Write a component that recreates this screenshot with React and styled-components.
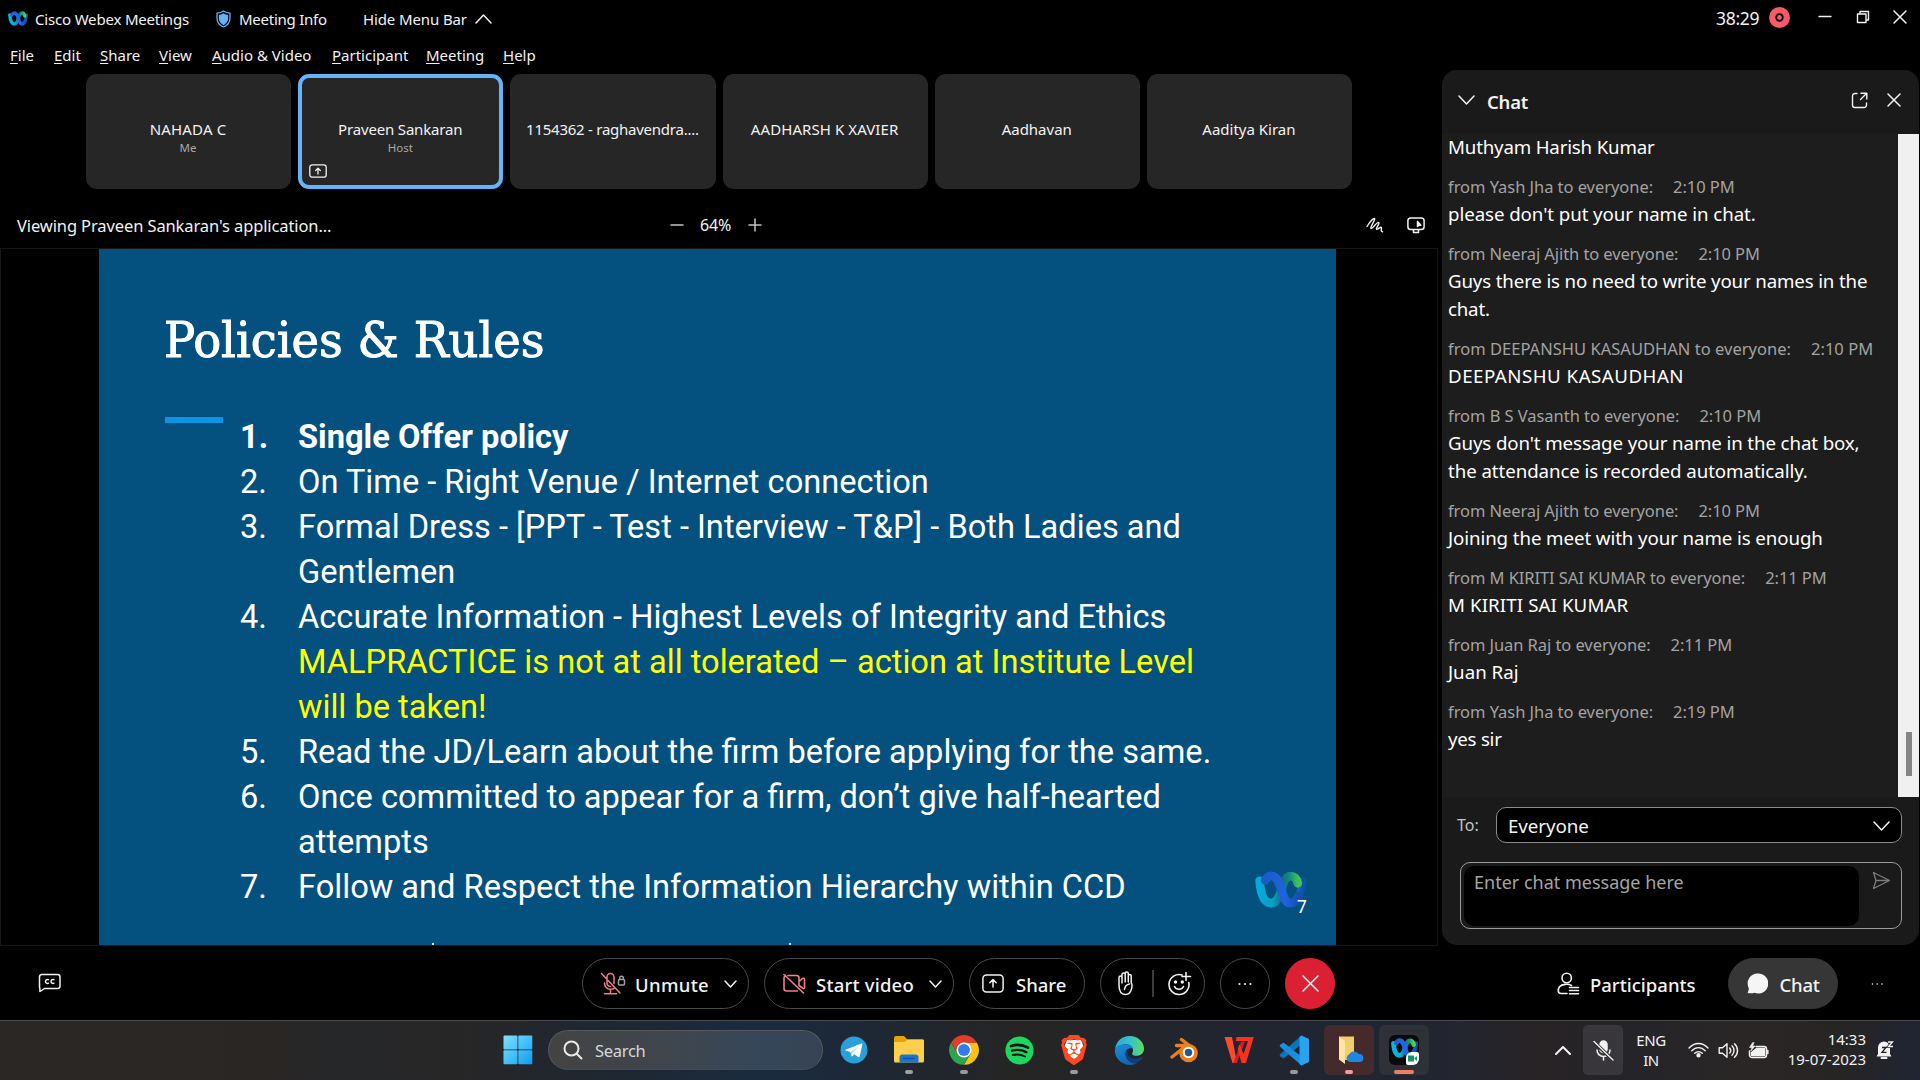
import React from "react";
import styled, { createGlobalStyle, css } from "styled-components";
import { SiBrave } from "react-icons/si";

const Global = createGlobalStyle`
  * { box-sizing: border-box; }
  body { margin: 0; background: #000; overflow: hidden; }
`;

const ui = css`
  font-family: "Noto Sans", "Open Sans", sans-serif;
`;

const Screen = styled.div`
  ${ui}
  width: 1920px;
  height: 1080px;
  background: #000;
  color: #f2f2f2;
  display: flex;
  flex-direction: column;
  overflow: hidden;
  white-space: nowrap;
`;

const Workspace = styled.div`
  height: 945px;
  display: grid;
  grid-template-columns: 1442px 477px;
`;

const Left = styled.div`
  display: flex;
  flex-direction: column;
`;

const Right = styled.div`
  display: flex;
  flex-direction: column;
`;

/* ---------- title bar and menus ---------- */

const TitleBar = styled.div`
  height: 38px;
  display: flex;
  align-items: center;
  font-size: 15px;
`;

const TitleItem = styled.div`
  display: flex;
  align-items: center;
  line-height: 20px;
  width: ${(p) => p.$w}px;
  margin-left: ${(p) => p.$ml}px;
  padding-bottom: ${(p) => p.$pb || 0}px;
  gap: ${(p) => p.$gap}px;
  letter-spacing: ${(p) => p.$ls || 0}px;
`;

const MenuBar = styled.div`
  height: 36px;
  padding: 6px 0 0 10px;
  display: flex;
  gap: 20px;
  font-size: 15px;
  line-height: 22px;
`;

const MenuItem = styled.span`
  width: ${(p) => p.$w}px;
  &::first-letter {
    text-decoration: underline;
    text-underline-offset: 2px;
  }
`;

const WindowControls = styled.div`
  height: 70px;
  display: flex;
  justify-content: flex-end;
  padding: 6px 12px 0 0;
`;

const ControlRow = styled.div`
  height: 22px;
  display: flex;
  align-items: center;
`;

const ControlGap = styled.div`
  width: ${(p) => p.$w}px;
`;

const Timer = styled.span`
  font-size: 17.5px;
  line-height: 20px;
  padding-top: 2px;
  width: 53px;
  letter-spacing: -0.3px;
`;

/* ---------- participant strip ---------- */

const Strip = styled.div`
  width: 1266px;
  height: 115px;
  margin-left: 86px;
  display: grid;
  grid-template-columns: repeat(6, 1fr);
  gap: 7px;
`;

const Tile = styled.div`
  position: relative;
  background: #262626;
  border-radius: 11px;
  border: 4px solid ${(p) => (p.$active ? "#64b4fa" : "#262626")};
  display: flex;
  flex-direction: column;
  align-items: center;
  padding: 40px 1px 0 0;
`;

const TileName = styled.div`
  font-size: 15px;
  line-height: 22px;
  letter-spacing: ${(p) => p.$ls || 0}px;
`;

const TileRole = styled.div`
  font-size: 11.5px;
  line-height: 15px;
  color: #a8a8a8;
`;

const TileBadge = styled.div`
  position: absolute;
  left: 7px;
  bottom: 7px;
  display: flex;
`;

/* ---------- share bar and stage ---------- */

const ShareBar = styled.div`
  height: 59px;
  padding: 13px 17px 0 17px;
  display: flex;
  align-items: center;
  font-size: 16.5px;
`;

const ShareTitle = styled.div`
  width: 653px;
  letter-spacing: -0.11px;
`;

const ZoomGroup = styled.div`
  flex: 1;
  display: flex;
  align-items: center;
`;

const ZoomValue = styled.span`
  width: 64px;
  padding-left: 16px;
  font-size: 16px;
  letter-spacing: -0.1px;
`;

const ShareTools = styled.div`
  display: flex;
  gap: 23px;
  align-items: center;
`;

const Stage = styled.div`
  width: 1438px;
  height: 698px;
  border: 1px solid #161616;
  padding-left: 98px;
`;

const Slide = styled.div`
  position: relative;
  width: 1237px;
  height: 696px;
  background: #04507e;
  padding: 54px 0 0 66px;
  font-family: Roboto, sans-serif;
  color: #fff;
  overflow: hidden;
`;

const SlideTitle = styled.h1`
  margin: 0 0 0 -1px;
  height: 75px;
  line-height: 76px;
  font-family: "DejaVu Serif Condensed", "DejaVu Serif", serif;
  font-stretch: condensed;
  font-weight: 400;
  font-size: 49px;
  -webkit-text-stroke: 0.9px #fff;
  transform: scaleX(1.053);
  transform-origin: left;
`;

const Accent = styled.div`
  width: 58px;
  height: 6px;
  margin-top: 39px;
  background: #0c95e4;
`;

const Rules = styled.ol`
  list-style: none;
  margin: -8px 0 0 75px;
  padding: 0;
  font-size: 32.62px;
  line-height: 45.05px;
`;

const Rule = styled.li`
  display: grid;
  grid-template-columns: 58px auto;
  font-weight: ${(p) => (p.$bold ? 700 : 400)};
`;

const Line = styled.div`
  color: ${(p) => (p.$warn ? "#ffff00" : "#fff")};
`;

const Watermark = styled.div`
  position: absolute;
  left: 1156px;
  top: 622px;
  display: flex;
  opacity: 0.85;
`;

const PageNumber = styled.div`
  position: absolute;
  left: 1198px;
  top: 648px;
  font-size: 17.5px;
  line-height: 20px;
`;

const CutGlyph = styled.div`
  position: absolute;
  left: ${(p) => p.$x}px;
  top: 694px;
  width: 2px;
  height: 2px;
  background: #cfe0ea;
`;

/* ---------- chat panel ---------- */

const Panel = styled.div`
  height: 875px;
  background: #1a1a1a;
  border-radius: 15px;
  overflow: hidden;
  display: flex;
  flex-direction: column;
`;

const PanelHead = styled.div`
  height: 64px;
  display: flex;
  align-items: center;
  padding: 0 18px 4px 16px;
`;

const PanelTitle = styled.div`
  flex: 1;
  padding: 3px 0 0 12px;
  font-size: 18.5px;
  font-weight: 600;
  letter-spacing: -0.2px;
`;

const Messages = styled.div`
  height: 663px;
  background: #1d1d1d;
  display: flex;
`;

const MessageList = styled.div`
  flex: 1;
  margin-top: -1px;
  padding-left: 6px;
`;

const Message = styled.div`
  margin-bottom: 12px;
`;

const Meta = styled.div`
  height: 27px;
  line-height: 28px;
  display: flex;
  gap: 20px;
  font-size: 16.5px;
  color: #a3a3a3;
  letter-spacing: ${(p) => p.$ls || 0}px;
`;

const Body = styled.div`
  height: 28px;
  line-height: 28px;
  font-size: 18.7px;
  color: #fff;
  letter-spacing: ${(p) => p.$ls || 0}px;
`;

const ScrollTrack = styled.div`
  width: 21px;
  background: #f0f0f0;
  padding: 598px 0 0 8px;
`;

const ScrollThumb = styled.div`
  width: 6px;
  height: 44px;
  background: #858585;
`;

const ToRow = styled.div`
  display: flex;
  align-items: center;
  padding: 10px 17px 0 15px;
  font-size: 16px;
  color: #c4c4c4;
`;

const ToLabel = styled.div`
  width: 39px;
`;

const Select = styled.div`
  flex: 1;
  height: 36px;
  border: 1px solid #8a8a8a;
  border-radius: 10px;
  background: #000;
  color: #f4f4f4;
  font-size: 18.8px;
  letter-spacing: -0.1px;
  display: flex;
  align-items: center;
  justify-content: space-between;
  padding: 2px 11px 0 11px;
`;

const Composer = styled.div`
  margin: 19px 17px 0 18px;
  height: 67px;
  border: 1px solid #9a9a9a;
  border-radius: 10px;
  display: flex;
  padding: 3px 10px 2px 3px;
  justify-content: space-between;
`;

const Entry = styled.div`
  width: 395px;
  background: #000;
  border-radius: 10px;
  padding: 2px 0 0 10px;
  font-size: 18px;
  line-height: 28px;
  color: #a5a5a5;
`;

const SendSlot = styled.div`
  padding-top: 5px;
`;

/* ---------- call controls ---------- */

const CallBar = styled.div`
  height: 75px;
  padding-top: 13px;
  display: flex;
  align-items: flex-start;
`;

const CaptionSlot = styled.div`
  width: 582px;
  height: 50px;
  padding-left: 38px;
  display: flex;
  align-items: center;
`;

const CallGroup = styled.div`
  display: flex;
  gap: 15px;
  width: 975px;
`;

const Pill = styled.div`
  width: ${(p) => p.$w}px;
  height: 51px;
  border-radius: 26px;
  border: 1px solid ${(p) => p.$fill || "#4a4a4a"};
  background: ${(p) => p.$fill || "transparent"};
  padding-left: ${(p) => p.$pl || 0}px;
  justify-content: ${(p) => (p.$pl ? "flex-start" : "center")};
  display: flex;
  align-items: center;
  flex-shrink: 0;
`;

const PillText = styled.span`
  font-size: 18.5px;
  font-weight: 500;
  padding-top: 2px;
  width: ${(p) => p.$w}px;
  margin-left: ${(p) => p.$ml}px;
  letter-spacing: ${(p) => p.$ls || 0}px;
`;

const Divider = styled.div`
  width: 2px;
  height: 27px;
  background: #3c3c3c;
  margin: 0 14px 0 18px;
`;

const PanelButtons = styled.div`
  display: flex;
  align-items: center;
`;

const ParticipantsButton = styled.div`
  width: 170.5px;
  display: flex;
  align-items: center;
`;

const MoreSlot = styled.div`
  margin-left: 33px;
  display: flex;
`;

/* ---------- taskbar ---------- */

const Taskbar = styled.div`
  height: 60px;
  border-top: 1px solid #4b4b4b;
  padding-bottom: 1px;
  display: flex;
  align-items: center;
  background: linear-gradient(
    90deg,
    #2b2725 0%, #2a2624 14%, #252729 17%, #272627 24%, #1f2730 31%,
    #1a2b3f 40%, #1e2733 46%, #262524 53%, #212530 63%, #1f2631 72%,
    #232530 76%, #282325 80%, #242429 85%, #2a2625 91%, #272424 96%, #1f2532 100%
  );
`;

const StartSlot = styled.div`
  width: 548px;
  padding-left: 502.5px;
  display: flex;
`;

const SearchBox = styled.div`
  width: 275px;
  height: 40px;
  border-radius: 20px;
  border: 1px solid #55585c;
  border-bottom-color: #434a52;
  background: linear-gradient(90deg, #444343, #3c4651 55%, #35465a 80%, #374352);
  display: flex;
  align-items: center;
  gap: 12px;
  padding-left: 14px;
  font-size: 16.5px;
  letter-spacing: -0.3px;
  color: #d6d6d6;
`;

const Apps = styled.div`
  display: flex;
  gap: 5px;
  margin-left: 6px;
`;

const AppSlot = styled.div`
  position: relative;
  width: 50px;
  height: 50px;
  border-radius: 6px;
  background: ${(p) => p.$bg || "transparent"};
  display: flex;
  align-items: center;
  justify-content: center;
`;

const Indicator = styled.div`
  position: absolute;
  bottom: 1px;
  left: calc(50% - ${(p) => p.$w / 2}px);
  width: ${(p) => p.$w}px;
  height: 4px;
  border-radius: 2px;
  background: ${(p) => p.$c};
`;

const Tray = styled.div`
  margin-left: 126px;
  display: flex;
  align-items: center;
  font-size: 15px;
`;

const MicTile = styled.div`
  width: 40px;
  height: 50px;
  margin-left: 12px;
  border-radius: 5px;
  background: rgba(255, 255, 255, 0.09);
  display: flex;
  align-items: center;
  justify-content: center;
`;

const Lang = styled.div`
  width: 56px;
  text-align: center;
  line-height: 20px;
  padding-bottom: 1px;
  letter-spacing: -0.4px;
`;

const StatusIcons = styled.div`
  display: flex;
  align-items: center;
  gap: 9px;
  margin-left: 9px;
`;

const Clock = styled.div`
  width: 97px;
  text-align: right;
  line-height: 20px;
  padding-bottom: 2px;
  margin-right: 10px;
`;

const WebexTile = styled.div`
  position: relative;
  width: 30px;
  height: 30px;
  border-radius: 6px;
  background: #0a0a0c;
  display: flex;
  align-items: center;
  justify-content: center;
  padding-bottom: 4px;
`;

const CamBadge = styled.div`
  position: absolute;
  right: 0;
  bottom: 0;
  width: 13px;
  height: 13px;
  border-radius: 6px 2px 6px 2px;
  background: #fff;
  display: flex;
  align-items: center;
  justify-content: center;
`;

/* ---------- drawings ---------- */

const Svg = ({ w, h, vb, children, sw = 1.4, stroke = "#f2f2f2" }) => (
  <svg width={w} height={h} viewBox={vb || `0 0 ${w} ${h}`} fill="none" stroke={stroke}
    strokeWidth={sw} strokeLinecap="round" strokeLinejoin="round">{children}</svg>
);

const WebexLogo = ({ w, h, id }) => (
  <svg width={w} height={h} viewBox="0 0 50 36" fill="none" strokeLinecap="round" preserveAspectRatio="none">
    <defs>
      <linearGradient id={id + "a"} x1="0" x2="1"><stop offset="0" stopColor="#07b8e6" /><stop offset="0.6" stopColor="#0bb0cb" /><stop offset="1" stopColor="#1a6fa0" /></linearGradient>
      <linearGradient id={id + "b"} x1="0" x2="1"><stop offset="0" stopColor="#0f6f80" /><stop offset="0.5" stopColor="#149a80" /><stop offset="1" stopColor="#4fd452" /></linearGradient>
      <linearGradient id={id + "c"} x1="0" x2="1"><stop offset="0" stopColor="#1f5fd6" /><stop offset="0.6" stopColor="#2467f0" /><stop offset="1" stopColor="#1450b4" /></linearGradient>
    </defs>
    <path d="M46.500 9.500C46 19 42 31 34.500 31" stroke={`url(#${id}c)`} strokeWidth="7" />
    <path d="M4.500 9.500C5.500 22 8.500 31.200 16 31.200C21 31.200 24 25 26 18" stroke={`url(#${id}a)`} strokeWidth="8.500" />
    <path d="M26 18C28 9 30.500 5 35 5C39 5 41 8 42 12" stroke={`url(#${id}b)`} strokeWidth="8.500" />
    <path d="M10 9C11.500 6 13.500 4.800 16 4.800C27 5 25 31.200 34.500 31.200C38 31.200 41 28.500 43 24" stroke={`url(#${id}c)`} strokeWidth="8.500" />
  </svg>
);

const Chevron = ({ up, w = 16, h = 9, sw = 1.5, color }) => (
  <Svg w={w} h={h} sw={sw} stroke={color || "#f2f2f2"}>
    <path d={up ? `M1 ${h - 1}L${w / 2} 1L${w - 1} ${h - 1}` : `M1 1L${w / 2} ${h - 1}L${w - 1} 1`} />
  </Svg>
);

const Cross = ({ s, sw = 1.5 }) => (
  <Svg w={s} h={s} sw={sw}><path d={`M1 1L${s - 1} ${s - 1}M${s - 1} 1L1 ${s - 1}`} /></Svg>
);

const Shield = () => (
  <Svg w={15} h={18} sw={1.3} stroke="#64b4fa">
    <path d="M7.500 1C9.500 2.500 11.500 3 14 3.200V8C14 12.500 11.500 15.500 7.500 17C3.500 15.500 1 12.500 1 8V3.200C3.500 3 5.500 2.500 7.500 1Z" />
    <path d="M7.500 4C9 5 10.300 5.300 11.500 5.400V8C11.500 11 10 13 7.500 14.300C5 13 3.500 11 3.500 8V5.400C4.700 5.300 6 5 7.500 4Z" fill="#64b4fa" />
  </Svg>
);

const RecordDot = () => (
  <svg width="21" height="21"><circle cx="10.500" cy="10.500" r="10.500" fill="#f65a6b" /><circle cx="10.500" cy="10.500" r="3.300" fill="none" stroke="#000" strokeWidth="1.800" /></svg>
);

const ShareBadge = () => (
  <Svg w={18} h={14} sw={1.3}><rect x="0.800" y="0.800" width="16.400" height="12.400" rx="2.500" /><path d="M9 10V4.500M6.700 6.500L9 4.300L11.300 6.500" /></Svg>
);

const Squiggle = () => (
  <Svg w={18} h={16} sw={1.4}><path d="M1 9.500C3.500 5.500 6.500 1.500 8.500 1.500C10 2 3.500 10.500 5 11.500C6.500 12 11 4.500 12.800 5.500C14 6.500 9.500 11.500 10.500 12.300C11.500 12.900 14 9.800 15.300 10.300C16.300 11 13.800 14.300 16.500 14.800" /></Svg>
);

const Monitor = () => (
  <Svg w={18} h={17} sw={1.5}><rect x="0.900" y="1" width="16.200" height="11.500" rx="2.800" /><path d="M6.500 13V15.500H11.500V13" /><path d="M10.500 4.500V9.500L12 8.300L13.800 8.300Z" fill="#f2f2f2" /></Svg>
);

const PopOut = () => (
  <Svg w={17} h={17} sw={1.4}><path d="M6 1.500H4A2.500 2.500 0 0 0 1.500 4V13A2.500 2.500 0 0 0 4 15.500H13A2.500 2.500 0 0 0 15.500 13V11M10 1.200H15.800V7M15.500 1.500L9.500 7.500" /></Svg>
);

const Send = () => (
  <Svg w={19} h={19} sw={1.3} stroke="#7c7c7c"><path d="M1.500 1.500L17.500 9.500L1.500 17.500L4 9.500ZM4 9.500H17" /></Svg>
);

const Captions = () => (
  <Svg w={23} h={20} sw={1.5}>
    <path d="M3.500 1.500H19.500A2.500 2.500 0 0 1 22 4V13A2.500 2.500 0 0 1 19.500 15.500H6.500L2 18.500C1.500 18.500 2.500 16.500 1.500 14V4A2.500 2.500 0 0 1 3.500 1.500Z" />
    <path d="M10.500 6.700A2 2 0 1 0 10.500 10.200M16 6.700A2 2 0 1 0 16 10.200" />
  </Svg>
);

const MutedMic = () => (
  <svg width="26" height="23" fill="none" strokeLinecap="round" strokeLinejoin="round" strokeWidth="1.500">
    <g stroke="#f0808f">
      <path d="M7 9V5A3.500 3.500 0 0 1 14 5V11.500M7 9V11A3.500 3.500 0 0 0 10.500 14.500M4.500 11A6 6 0 0 0 10.500 17.300C11.800 17.300 13 17 14 16.300M10.500 17.300V21.500M4.500 21.800H16.500M1.500 1.500L20 21" />
    </g>
    <g stroke="#a0a0a0"><rect x="18.500" y="7.500" width="6" height="5.500" rx="1" /><path d="M19.700 7.500V6A1.800 1.800 0 0 1 23.300 6V7.500" /></g>
  </svg>
);

const NoVideo = () => (
  <Svg w={24} h={21} sw={1.6} stroke="#f0808f">
    <path d="M6 2.500H14.500A2.500 2.500 0 0 1 17 5V12.500M15.500 18H4.500A2.500 2.500 0 0 1 2 15.500V5A2.500 2.500 0 0 1 3.500 2.700M17 8.500L20.500 5.500C21.500 5 22.500 5.200 22.500 6.500V14.500C22.500 15.500 21.500 15.800 20.500 15L17 12.500M2 1.500L21.500 20" />
  </Svg>
);

const ShareIcon = () => (
  <Svg w={22} h={19} sw={1.5}><rect x="0.900" y="0.900" width="20.200" height="17.200" rx="3.500" /><path d="M11 13V6M7.800 8.800L11 5.600L14.200 8.800" /></Svg>
);

const Hand = () => (
  <Svg w={17} h={25} sw={1.5}>
    <path d="M2 14V6.500A1.500 1.500 0 0 1 5 6.500V12M5 11V3.500A1.600 1.600 0 0 1 8.200 3.500V11M8.200 10V2.500A1.500 1.500 0 0 1 11.300 2.500V11M11.300 10V4.500A1.500 1.500 0 0 1 14.200 4.500V12C15.500 13 15.500 23.500 8.500 23.500C4 23.500 2 20.500 2 14M7.500 18.500C8 15 10 13.500 12.500 13" />
  </Svg>
);

const Smile = () => (
  <Svg w={24} h={26} sw={1.6}>
    <path d="M14 4A10 10 0 1 0 20.800 11.500M18 1.500V9.500M14 5.500H22.500M6.500 15.500A5 5 0 0 0 15.500 15.500" />
    <circle cx="7.500" cy="11" r="0.900" fill="#f2f2f2" /><circle cx="14.300" cy="11" r="0.900" fill="#f2f2f2" />
  </Svg>
);

const Dots = ({ gap = 5.5, r = 1.1 }) => (
  <svg width={gap * 2 + 3} height="4" fill="#f2f2f2">
    <circle cx="1.500" cy="2" r={r} /><circle cx={1.5 + gap} cy="2" r={r} /><circle cx={1.5 + gap * 2} cy="2" r={r} />
  </svg>
);

const PersonList = () => (
  <Svg w={23} h={24} sw={1.6}>
    <circle cx="9.700" cy="6" r="4.700" />
    <path d="M10 21.500H4C0.500 21.500 0.800 17 2.500 14.700C5 12 11 11.500 14.500 13.500M12.500 15.500H21.500M12.500 18.500H21.500M12.500 21.700H21.500" />
  </Svg>
);

const Bubble = () => (
  <svg width="21" height="21"><path d="M10.500 0.500A10 10 0 1 1 7.500 19.700C5.500 20.500 3 20.500 0.800 20C0.300 19.500 2 18 1.700 15A10 10 0 0 1 10.500 0.500Z" fill="#f5f5f5" /></svg>
);

const WindowsLogo = () => (
  <svg width="30" height="30">
    <defs><linearGradient id="win" x1="0" y1="0" x2="30" y2="30" gradientUnits="userSpaceOnUse"><stop offset="0" stopColor="#86defb" /><stop offset="0.500" stopColor="#45c0fa" /><stop offset="1" stopColor="#1297ee" /></linearGradient></defs>
    <g fill="url(#win)"><rect x="0.500" y="0.500" width="14" height="14" rx="1" /><rect x="15.300" y="0.500" width="14" height="14" rx="1" /><rect x="0.500" y="15.300" width="14" height="14" rx="1" /><rect x="15.300" y="15.300" width="14" height="14" rx="1" /></g>
  </svg>
);

const Magnifier = () => (
  <Svg w={20} h={20} sw={2} stroke="#e8e8e8"><circle cx="8.500" cy="8.500" r="7" /><path d="M13.700 13.700L18.500 18.500" /></Svg>
);

const Telegram = () => (
  <svg width="28" height="28"><circle cx="14" cy="14" r="13.500" fill="#2b9fda" /><path d="M5.500 13.700L21.500 7.500C22.300 7.300 22.500 7.800 22.300 8.500L19.700 20.500C19.500 21.300 19 21.500 18.300 21L14.300 18.200L12.300 20.200C11.800 20.600 11.500 20.400 11.400 20L10.500 16L5.500 14.500C5 14.300 5 13.900 5.500 13.700Z" fill="#fff" /><path d="M10.500 16L18.500 10.500L12.500 17L11.500 20Z" fill="#b9d9ec" /></svg>
);

const FolderIcon = () => (
  <svg width="32" height="30">
    <path d="M1 3A2 2 0 0 1 3 1H11L14.500 4.500H29A2 2 0 0 1 31 6.500V12H1Z" fill="#e3a30b" />
    <path d="M1 7H12L14.500 4.500H30A1 1 0 0 1 31 5.500V26A1.500 1.500 0 0 1 29.500 27.500H2.500A1.500 1.500 0 0 1 1 26Z" fill="#fdcf4b" />
    <path d="M6.500 27.500V22.500A3 3 0 0 1 9.500 19.500H22.500A3 3 0 0 1 25.500 22.500V27.500Z" fill="#1677cd" /><path d="M10 23.500H22" stroke="#0a4f97" strokeWidth="1.300" />
  </svg>
);

const Chrome = () => (
  <svg width="30" height="30" viewBox="0 0 48 48">
    <path d="M24 12H44.500A23.700 23.700 0 0 1 24 47.700L34.400 30Z" fill="#fbc116" />
    <path d="M13.600 30L3.500 12A23.700 23.700 0 0 0 24 47.700L34.400 30Z" fill="#2da44e" />
    <path d="M3.500 12A23.700 23.700 0 0 1 44.500 12H24L13.600 30Z" fill="#e33b2e" />
    <circle cx="24" cy="24" r="12" fill="#fff" /><circle cx="24" cy="24" r="9.500" fill="#2f7de9" />
  </svg>
);

const Spotify = () => (
  <svg width="29" height="29"><circle cx="14.500" cy="14.500" r="14" fill="#1ed760" /><g fill="none" stroke="#111" strokeLinecap="round"><path d="M6 10C11.500 8.300 18 8.800 23 11.700" strokeWidth="2.700" /><path d="M7 14.700C12 13.300 17 13.800 21.500 16.200" strokeWidth="2.300" /><path d="M7.700 19C12 17.900 16 18.300 20 20.500" strokeWidth="1.900" /></g></svg>
);

const Brave = () => (
  <svg width="30" height="30" viewBox="0 0 30 30">
    <path d="M8 5H22L24.500 11L22 20L15 26L8 20L5.500 11Z" fill="#fff" />
    <SiBrave size={30} color="#fb4a22" />
  </svg>
);

const Edge = () => (
  <svg width="31" height="31" viewBox="0 0 32 32">
    <defs>
      <linearGradient id="e1" x1="0" x2="1"><stop offset="0" stopColor="#2aa7e0" /><stop offset="0.550" stopColor="#36c5c8" /><stop offset="1" stopColor="#62dc4e" /></linearGradient>
      <linearGradient id="e2" x1="0" y1="0" x2="0.400" y2="1"><stop offset="0" stopColor="#1b8fd8" /><stop offset="1" stopColor="#1166b8" /></linearGradient>
    </defs>
    <path d="M1 15C2 6 8.500 1 16 1C25 1 31 7.500 31 14C31 19 27 21.500 23.500 21.500C20 21.500 18 20 19 18.500C20.500 16.500 20 10 12.500 9.500C7 9.500 3 12 1 15Z" fill="url(#e1)" />
    <path d="M1 15C3 11.500 7.500 9.500 12.500 9.500C16.500 9.800 19 12 19.500 14.500C17 12.500 11.500 14.500 12 20C12.500 25.500 18 30 23.500 29C20 31.500 14 31.800 9 29C3.500 26 0.500 21 1 15Z" fill="url(#e2)" />
    <path d="M12 19C11.500 24.500 16.500 29.500 22.500 29C26 28 28.500 25.500 29.500 23.500C29.700 22.800 29 22.500 28.300 22.900C22 26 14 24.500 13.500 17C12.700 17.500 12.200 18 12 19Z" fill="#103f7d" />
  </svg>
);

const Blender = () => (
  <svg width="29" height="27" fill="none" stroke="#ea7f1c" strokeLinecap="round">
    <path d="M11.500 2.500L24 12M6.500 8.500H17M2 20L14 10.500" strokeWidth="3.400" />
    <circle cx="18.500" cy="16" r="9.300" fill="#ea7f1c" stroke="none" />
    <circle cx="18.500" cy="15.500" r="5.800" fill="#fff" stroke="none" />
    <circle cx="18.500" cy="15.500" r="3.700" fill="#24578f" stroke="none" />
  </svg>
);

const Wps = () => (
  <svg width="30" height="28">
    <path d="M0.500 1H8L13 27H8.500Z" fill="#ff4a30" />
    <path d="M9.500 27L17 5.500H21L13 27Z" fill="#c9211c" />
    <path d="M12.500 1H29.800L22 27H17.500L13.800 13L15.500 8L19.500 18L24 5H11.800Z" fill="#f5331f" />
  </svg>
);

const Code = () => (
  <svg width="31" height="31">
    <path d="M22.500 0.500V9.500L4.500 23.500L0.800 21V19.500Z" fill="#0b74bf" />
    <path d="M22.500 30.500V21.500L4.500 7.500L0.800 10V11.500Z" fill="#1a8fdb" />
    <path d="M22.500 0.500L30 4V27L22.500 30.500L20.500 29V2Z" fill="#2ba2ef" />
  </svg>
);

const CloudFolder = () => (
  <svg width="30" height="29"><path d="M5 0.500H20V24H7L5 22Z" fill="#f3cd6c" /><path d="M5 0.500L11 5V28L5 23.500Z" fill="#ffe6a0" /><path d="M15.500 26A4 4 0 0 1 15 18.500A5.500 5.500 0 0 1 24.500 18A4 4 0 0 1 26 26Z" fill="#1e88e0" /></svg>
);

const TrayMic = () => (
  <Svg w={21} h={21} sw={1.5}><rect x="7" y="1" width="7" height="11.500" rx="3.500" fill="#f2f2f2" /><path d="M4 10A6.500 6.500 0 0 0 17 10M10.500 16.500V20" /><path d="M1 2L20 20" stroke="#2b2b2e" strokeWidth="3.500" /><path d="M1 1.500L20 20" /></Svg>
);

const Wifi = () => (
  <Svg w={21} h={16} sw={1.4}><path d="M1 6C6.500 0 14.500 0 20 6M3.800 8.800C7.800 4.600 13.200 4.600 17.200 8.800M6.700 11.300C9 9 12 9 14.300 11.300" /><circle cx="10.500" cy="13.300" r="1.500" fill="#f2f2f2" /></Svg>
);

const Speaker = () => (
  <Svg w={21} h={17} sw={1.4}><path d="M1.200 5.800H4.500L9 1.800V15.200L4.500 11.200H1.200ZM11.700 6C13 7.500 13 9.500 11.700 11M14 3.800C16.700 6.500 16.700 10.500 14 13.200M16.500 1.800C20.500 5.500 20.500 11.500 16.500 15.200" /></Svg>
);

const Battery = () => (
  <Svg w={21} h={17} sw={1.5}><path d="M8 4.500H16A2.500 2.500 0 0 1 18.500 7V13A2.500 2.500 0 0 1 16 15.500H4A2.500 2.500 0 0 1 1.500 13V9" /><path d="M8.500 6.500H16.500V13.500H3.500V10.500Z" fill="#f2f2f2" /><path d="M19.800 8.500V11.500" /><path d="M4.500 0.800L1.500 5.500H4L2.800 9L7 4H4.500L6 0.800Z" fill="#f2f2f2" strokeWidth="0.600" /></Svg>
);

const Bell = () => (
  <svg width="18" height="20" fill="none"><path d="M2 14V7.500A6 6 0 0 1 14 7.500V14L15.500 16.500H0.500Z" fill="#f2f2f2" /><path d="M5.500 18H10.500" stroke="#f2f2f2" strokeWidth="2" strokeLinecap="round" /><path d="M6 7.500H10L6 12.300H10.500" stroke="#222" strokeWidth="1.300" /><path d="M12 2H16.500L12.500 6.500H17" stroke="#262424" strokeWidth="2.800" /><path d="M12 2H16.500L12.500 6.500H17" stroke="#f2f2f2" strokeWidth="1.300" /></svg>
);

/* ---------- data ---------- */

const menus = [["File", 24], ["Edit", 26], ["Share", 39], ["View", 33], ["Audio & Video", 100], ["Participant", 74], ["Meeting", 57], ["Help", 34]];

const people = [
  { name: "NAHADA C", role: "Me", ls: 0.2 },
  { name: "Praveen Sankaran", role: "Host", active: true, ls: -0.17 },
  { name: "1154362 - raghavendra....", ls: -0.25 },
  { name: "AADHARSH K XAVIER", ls: 0.08 },
  { name: "Aadhavan" },
  { name: "Aaditya Kiran" },
];

const rules = [
  { bold: true, lines: ["Single Offer policy"] },
  { lines: ["On Time - Right Venue / Internet connection"] },
  { lines: ["Formal Dress - [PPT - Test - Interview - T&P] - Both Ladies and", "Gentlemen"] },
  { lines: ["Accurate Information - Highest Levels of Integrity and Ethics", "!MALPRACTICE is not at all tolerated – action at Institute Level", "!will be taken!"] },
  { lines: ["Read the JD/Learn about the firm before applying for the same."] },
  { lines: ["Once committed to appear for a firm, don’t give half-hearted", "attempts"] },
  { lines: ["Follow and Respect the Information Hierarchy within CCD"] },
];

const chat = [
  { lines: [["Muthyam Harish Kumar", -0.18]] },
  { from: "Yash Jha", at: "2:10 PM", ls: -0.05, lines: [["please don't put your name in chat.", -0.07]] },
  { from: "Neeraj Ajith", at: "2:10 PM", ls: -0.08, lines: [["Guys there is no need to write your names in the", -0.15], ["chat.", -0.2]] },
  { from: "DEEPANSHU KASAUDHAN", at: "2:10 PM", ls: 0.02, lines: [["DEEPANSHU KASAUDHAN", 0.5]] },
  { from: "B S Vasanth", at: "2:10 PM", ls: -0.05, lines: [["Guys don't message your name in the chat box,", -0.11], ["the attendance is recorded automatically.", -0.07]] },
  { from: "Neeraj Ajith", at: "2:10 PM", ls: -0.08, lines: [["Joining the meet with your name is enough", -0.09]] },
  { from: "M KIRITI SAI KUMAR", at: "2:11 PM", ls: -0.07, lines: [["M KIRITI SAI KUMAR", 0.1]] },
  { from: "Juan Raj", at: "2:11 PM", ls: -0.07, lines: [["Juan Raj", 0]] },
  { from: "Yash Jha", at: "2:19 PM", ls: -0.05, lines: [["yes sir", -0.25]] },
];

const GREY = "#9b9b9b";

const apps = [
  { icon: <Telegram /> },
  { icon: <FolderIcon />, dot: [8, GREY] },
  { icon: <Chrome />, dot: [8, GREY] },
  { icon: <Spotify /> },
  { icon: <Brave />, dot: [8, GREY] },
  { icon: <Edge /> },
  { icon: <Blender /> },
  { icon: <Wps /> },
  { icon: <Code />, dot: [8, GREY] },
  { icon: <CloudFolder />, dot: [8, "#f59aa5"], bg: "#452a2b" },
  {
    icon: <WebexTile><WebexLogo w={27} h={20} id="t" /><CamBadge><svg width="9" height="7"><path d="M0 0.500H6V6.500H0ZM6 3.500L9 1V6Z" fill="#12956b" /></svg></CamBadge></WebexTile>,
    dot: [20, "#f17c62"], bg: "#2f3138",
  },
];

export default function App() {
  return (
    <Screen>
      <Global />
      <Workspace>
        <Left>
          <TitleBar>
            <TitleItem $ml={8} $w={196} $gap={7} $pb={1} $ls={-0.18}><WebexLogo w={20} h={15} id="h" />Cisco Webex Meetings</TitleItem>
            <TitleItem $ml={12} $w={147} $gap={8} $ls={-0.25}><Shield />Meeting Info</TitleItem>
            <TitleItem $ml={0} $w={140} $gap={8} $ls={-0.12}>Hide Menu Bar<Chevron up w={17} h={10} /></TitleItem>
          </TitleBar>
          <MenuBar>{menus.map(([m, w]) => <MenuItem key={m} $w={w}>{m}</MenuItem>)}</MenuBar>
          <Strip>
            {people.map((p) => (
              <Tile key={p.name} $active={p.active}>
                <TileName $ls={p.ls}>{p.name}</TileName>
                {p.role && <TileRole>{p.role}</TileRole>}
                {p.active && <TileBadge><ShareBadge /></TileBadge>}
              </Tile>
            ))}
          </Strip>
          <ShareBar>
            <ShareTitle>Viewing Praveen Sankaran's application...</ShareTitle>
            <ZoomGroup>
              <Svg w={14} h={14} sw={1.5} stroke="#c4c4c4"><path d="M1 7H13" /></Svg>
              <ZoomValue>64%</ZoomValue>
              <Svg w={14} h={14} sw={1.5} stroke="#c4c4c4"><path d="M1 7H13M7 1V13" /></Svg>
            </ZoomGroup>
            <ShareTools><Squiggle /><Monitor /></ShareTools>
          </ShareBar>
          <Stage>
            <Slide>
              <SlideTitle>Policies &amp; Rules</SlideTitle>
              <Accent />
              <Rules>
                {rules.map((r, i) => (
                  <Rule key={i} $bold={r.bold}>
                    <span>{i + 1}.</span>
                    <div>
                      {r.lines.map((l) => <Line key={l} $warn={l[0] === "!"}>{l.replace(/^!/, "")}</Line>)}
                    </div>
                  </Rule>
                ))}
              </Rules>
              <Watermark><WebexLogo w={51} h={37} id="w" /></Watermark>
              <PageNumber>7</PageNumber>
              <CutGlyph $x={333} />
              <CutGlyph $x={690} />
            </Slide>
          </Stage>
        </Left>
        <Right>
          <WindowControls>
            <ControlRow>
              <Timer>38:29</Timer>
              <RecordDot />
              <ControlGap $w={28} />
              <Svg w={14} h={14}><path d="M1 6.500H13" /></Svg>
              <ControlGap $w={24} />
              <Svg w={14} h={14}><path d="M1.500 4H10V12.500H1.500ZM4 4V1.500H12.500V10H10" /></Svg>
              <ControlGap $w={23} />
              <Cross s={14} />
            </ControlRow>
          </WindowControls>
          <Panel>
            <PanelHead>
              <Chevron w={17} h={10} />
              <PanelTitle>Chat</PanelTitle>
              <PopOut />
              <ControlGap $w={19} />
              <Cross s={14} />
            </PanelHead>
            <Messages>
              <MessageList>
                {chat.map((m, i) => (
                  <Message key={i}>
                    {m.from && <Meta $ls={m.ls}><span>from {m.from} to everyone:</span><span>{m.at}</span></Meta>}
                    {m.lines.map(([l, ls]) => <Body key={l} $ls={ls}>{l}</Body>)}
                  </Message>
                ))}
              </MessageList>
              <ScrollTrack><ScrollThumb /></ScrollTrack>
            </Messages>
            <ToRow><ToLabel>To:</ToLabel><Select>Everyone<Chevron w={17} h={10} /></Select></ToRow>
            <Composer><Entry>Enter chat message here</Entry><SendSlot><Send /></SendSlot></Composer>
          </Panel>
        </Right>
      </Workspace>

      <CallBar>
        <CaptionSlot><Captions /></CaptionSlot>
        <CallGroup>
          <Pill $w={167} $pl={17}><MutedMic /><PillText $ml={9} $w={89} $ls={0.33}>Unmute</PillText><Chevron w={13} h={8} /></Pill>
          <Pill $w={190} $pl={17}><NoVideo /><PillText $ml={10} $w={113} $ls={0.2}>Start video</PillText><Chevron w={13} h={8} /></Pill>
          <Pill $w={116} $pl={12}><ShareIcon /><PillText $ml={12} $w={55}>Share</PillText></Pill>
          <Pill $w={105} $pl={16}><Hand /><Divider /><Smile /></Pill>
          <Pill $w={50}><Dots /></Pill>
          <Pill $w={50} $fill="#dc2033"><Cross s={17} sw={1.5} /></Pill>
        </CallGroup>
        <PanelButtons>
          <ParticipantsButton><PersonList /><PillText $ml={10} $w={110}>Participants</PillText></ParticipantsButton>
          <Pill $w={110} $pl={18} $fill="#363636"><Bubble /><PillText $ml={12} $w={45} $ls={-0.2}>Chat</PillText></Pill>
          <MoreSlot><Dots gap={4.7} r={0.8} /></MoreSlot>
        </PanelButtons>
      </CallBar>

      <Taskbar>
        <StartSlot><WindowsLogo /></StartSlot>
        <SearchBox><Magnifier />Search</SearchBox>
        <Apps>
          {apps.map((a, i) => (
            <AppSlot key={i} $bg={a.bg}>{a.icon}{a.dot && <Indicator $w={a.dot[0]} $c={a.dot[1]} />}</AppSlot>
          ))}
        </Apps>
        <Tray>
          <Chevron up w={16} h={9} sw={2} />
          <MicTile><TrayMic /></MicTile>
          <Lang>ENG<br />IN</Lang>
          <StatusIcons><Wifi /><Speaker /><Battery /></StatusIcons>
          <Clock>14:33<br />19-07-2023</Clock>
          <Bell />
        </Tray>
      </Taskbar>
    </Screen>
  );
}
